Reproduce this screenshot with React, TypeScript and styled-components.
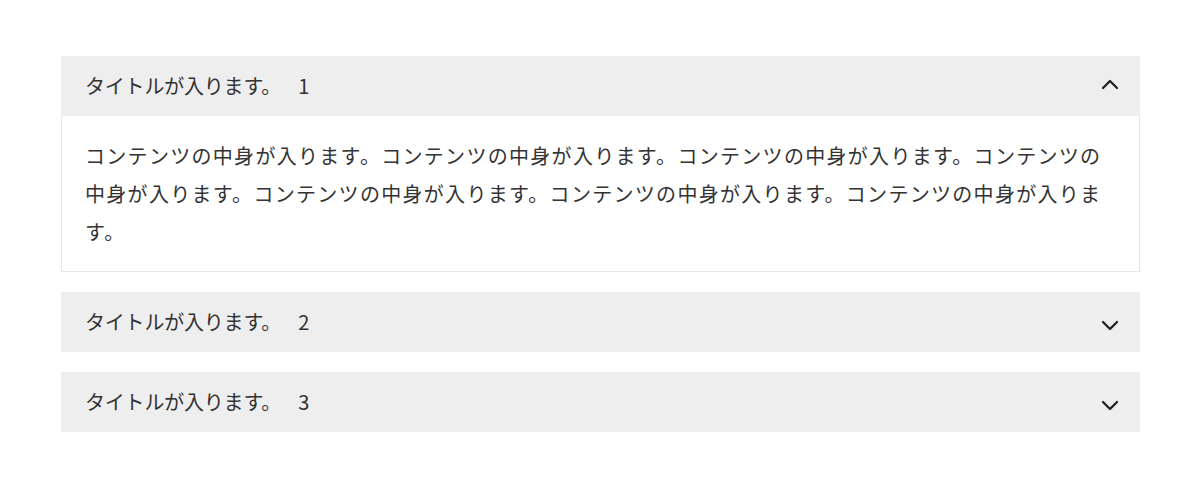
import React, { useState } from "react";
import styled, { createGlobalStyle } from "styled-components";

const Global = createGlobalStyle`
  html, body { margin: 0; padding: 0; background: #fff; }
  body { font-family: "Noto Sans CJK JP", "Noto Sans", sans-serif; color: #333; }
`;

const List = styled.div`
  display: flex;
  flex-direction: column;
  gap: 20px;
  margin: 56px 60px 0 61px;
`;

const Item = styled.div`
  display: flex;
  flex-direction: column;
`;

const Header = styled.button`
  display: flex;
  align-items: center;
  justify-content: space-between;
  height: 60px;
  padding: 0 18px 0 24px;
  border: none;
  background: #eeeeee;
  cursor: pointer;
  font-family: inherit;
  font-size: 20px;
  letter-spacing: -0.2px;
  color: #333;
  text-align: left;
`;

const Title = styled.span`
  margin-top: -1px;
`;

const Num = styled.span`
  margin-left: 13px;
`;

const Chevron = styled.svg<{ $open: boolean }>`
  width: 24px;
  height: 24px;
  margin-top: ${(p) => (p.$open ? "-2px" : "6px")};
  transform: rotate(${(p) => (p.$open ? "180deg" : "0deg")});
`;

const Body = styled.div`
  border: 1px solid #e6e6e6;
  border-top: none;
  padding: 21px 23px 20px 23px;
  font-size: 20px;
  letter-spacing: 1.3px;
  line-height: 38px;
  color: #333;
`;

const items = [{ n: "1" }, { n: "2" }, { n: "3" }];

const text =
  "コンテンツの中身が入ります。コンテンツの中身が入ります。コンテンツの中身が入ります。コンテンツの中身が入ります。コンテンツの中身が入ります。コンテンツの中身が入ります。コンテンツの中身が入ります。";

export default function App() {
  const [open, setOpen] = useState<number | null>(0);
  return (
    <>
      <Global />
      <List>
        {items.map((it, i) => (
          <Item key={i}>
            <Header onClick={() => setOpen(open === i ? null : i)}>
              <Title>
                タイトルが入ります。 <Num>{it.n}</Num>
              </Title>
              <Chevron $open={open === i} viewBox="0 0 24 24" fill="none" stroke="#222" strokeWidth="2.3" strokeLinecap="round" strokeLinejoin="round">
                <path d="M5 9l7 7 7-7" />
              </Chevron>
            </Header>
            {open === i && <Body>{text}</Body>}
          </Item>
        ))}
      </List>
    </>
  );
}
